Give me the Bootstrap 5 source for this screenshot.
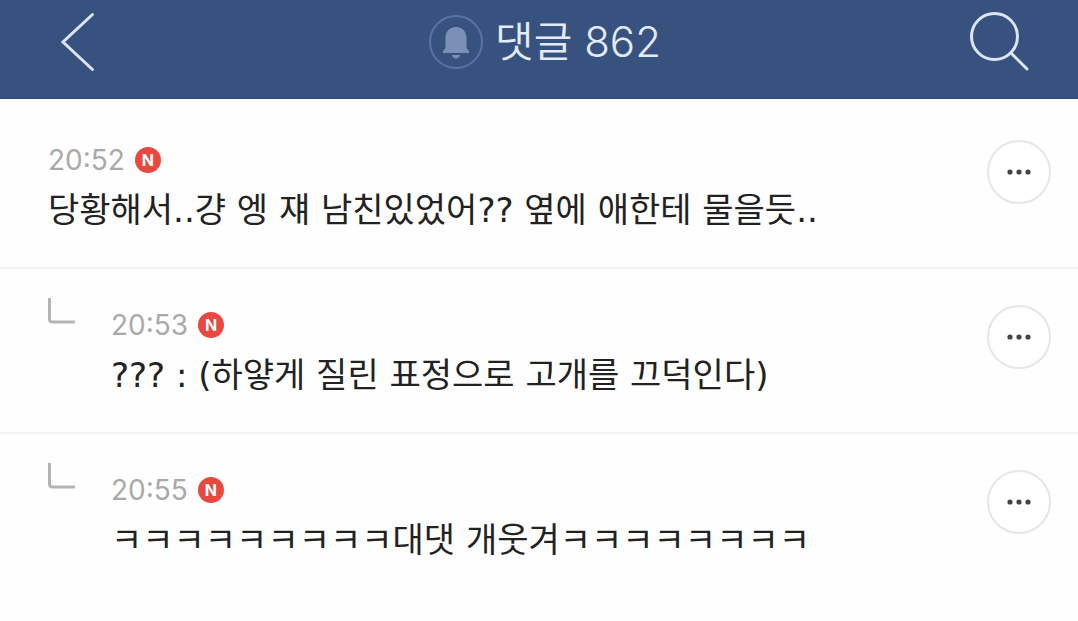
<!DOCTYPE html>
<html lang="ko">
<head>
<meta charset="utf-8">
<meta name="viewport" content="width=device-width, initial-scale=1">
<title>댓글 862</title>
<link href="https://cdn.jsdelivr.net/npm/bootstrap@5.3.0/dist/css/bootstrap.min.css" rel="stylesheet">
<script src="https://cdn.jsdelivr.net/npm/bootstrap@5.3.0/dist/js/bootstrap.bundle.min.js" defer></script>
<style>
body{font-family:Inter,"Noto Sans CJK KR",sans-serif;background:#fefefe;color:#222}
.topbar{background:#38527f;padding:12px 48px 26px 60px;border-bottom:1px solid #2f4877}
.topbar h1{font-size:42px;line-height:60px;font-weight:350;color:#e3eaf8}
.topbar svg{display:block}
.title-group{gap:12px}
.thread{padding-top:5px}
.comment{padding:36px 27px 27px 48px;border-bottom:2px solid #f3f3f3}
.comment:last-child{border-bottom:0}
.reply-mark{width:63px}
.reply-mark svg{display:block;margin-top:-8px}
.meta{gap:10px;font-size:28px;line-height:40px;color:#a9a9a9}
.message{font-family:"DejaVu Sans","Noto Sans CJK KR",sans-serif;font-size:34px;line-height:60px}
.new-badge{width:26px;height:26px;background:#e8483f;color:#fff;font-size:16px;line-height:26px;font-weight:700}
.more{width:64px;height:64px;border:2px solid #e6e6e6;background:#fff}
</style>
</head>
<body>
<header class="topbar d-flex align-items-center justify-content-between">
<button type="button" class="btn p-0 border-0" aria-label="뒤로"><svg width="60" height="60" viewBox="4 0 60 60" fill="none" stroke="#dce5f7" stroke-width="3" stroke-linecap="round"><path d="M36.500 2.500 7 30 36.500 57.500"/></svg></button>
<div class="title-group d-flex align-items-center">
<svg width="54" height="54" viewBox="0 0 54 54" aria-hidden="true"><circle cx="27" cy="27" r="26" fill="none" stroke="#5b73a0" stroke-width="2"/><path fill="#7c90b6" d="M27 12c-7 0-10.500 5-10.500 11v8c0 3-1.500 4-2.500 5v2h26v-2c-1-1-2.500-2-2.500-5v-8c0-6-3.500-11-10.500-11zM23 40h8c-.5 2-2 3.500-4 3.500s-3.500-1.500-4-3.500z"/></svg>
<h1 class="m-0">댓글 862</h1>
</div>
<button type="button" class="btn p-0 border-0" aria-label="검색"><svg width="60" height="60" viewBox="0 0 60 60" fill="none" stroke="#dce5f7" stroke-width="3" stroke-linecap="round"><circle cx="24.500" cy="24.500" r="23"/><path d="m41 41 16 16"/></svg></button>
</header>
<main class="thread">
<article class="comment d-flex">
<div class="flex-grow-1"><div class="meta d-flex align-items-center"><time>20:52</time><span class="new-badge rounded-circle text-center">N</span></div><p class="message m-0">당황해서..걍 엥 쟤 남친있었어?? 옆에 애한테 물을듯..</p></div>
<button type="button" class="btn more rounded-circle p-0 flex-shrink-0 d-flex align-items-center justify-content-center" aria-label="더보기"><svg width="26" height="6" viewBox="0 0 26 6" fill="#444"><circle cx="4" cy="3" r="2.600"/><circle cx="13" cy="3" r="2.600"/><circle cx="22" cy="3" r="2.600"/></svg></button>
</article>
<article class="comment d-flex">
<div class="reply-mark flex-shrink-0"><svg width="28" height="28" viewBox="0 0 28 28" fill="none" stroke="#b5b5b5" stroke-width="3"><path d="M1.500 1v21q0 3 3 3H27"/></svg></div>
<div class="flex-grow-1"><div class="meta d-flex align-items-center"><time>20:53</time><span class="new-badge rounded-circle text-center">N</span></div><p class="message m-0">??? : (하얗게 질린 표정으로 고개를 끄덕인다)</p></div>
<button type="button" class="btn more rounded-circle p-0 flex-shrink-0 d-flex align-items-center justify-content-center" aria-label="더보기"><svg width="26" height="6" viewBox="0 0 26 6" fill="#444"><circle cx="4" cy="3" r="2.600"/><circle cx="13" cy="3" r="2.600"/><circle cx="22" cy="3" r="2.600"/></svg></button>
</article>
<article class="comment d-flex">
<div class="reply-mark flex-shrink-0"><svg width="28" height="28" viewBox="0 0 28 28" fill="none" stroke="#b5b5b5" stroke-width="3"><path d="M1.500 1v21q0 3 3 3H27"/></svg></div>
<div class="flex-grow-1"><div class="meta d-flex align-items-center"><time>20:55</time><span class="new-badge rounded-circle text-center">N</span></div><p class="message m-0">ㅋㅋㅋㅋㅋㅋㅋㅋㅋ대댓 개웃겨ㅋㅋㅋㅋㅋㅋㅋㅋ</p></div>
<button type="button" class="btn more rounded-circle p-0 flex-shrink-0 d-flex align-items-center justify-content-center" aria-label="더보기"><svg width="26" height="6" viewBox="0 0 26 6" fill="#444"><circle cx="4" cy="3" r="2.600"/><circle cx="13" cy="3" r="2.600"/><circle cx="22" cy="3" r="2.600"/></svg></button>
</article>
</main>
</body>
</html>
